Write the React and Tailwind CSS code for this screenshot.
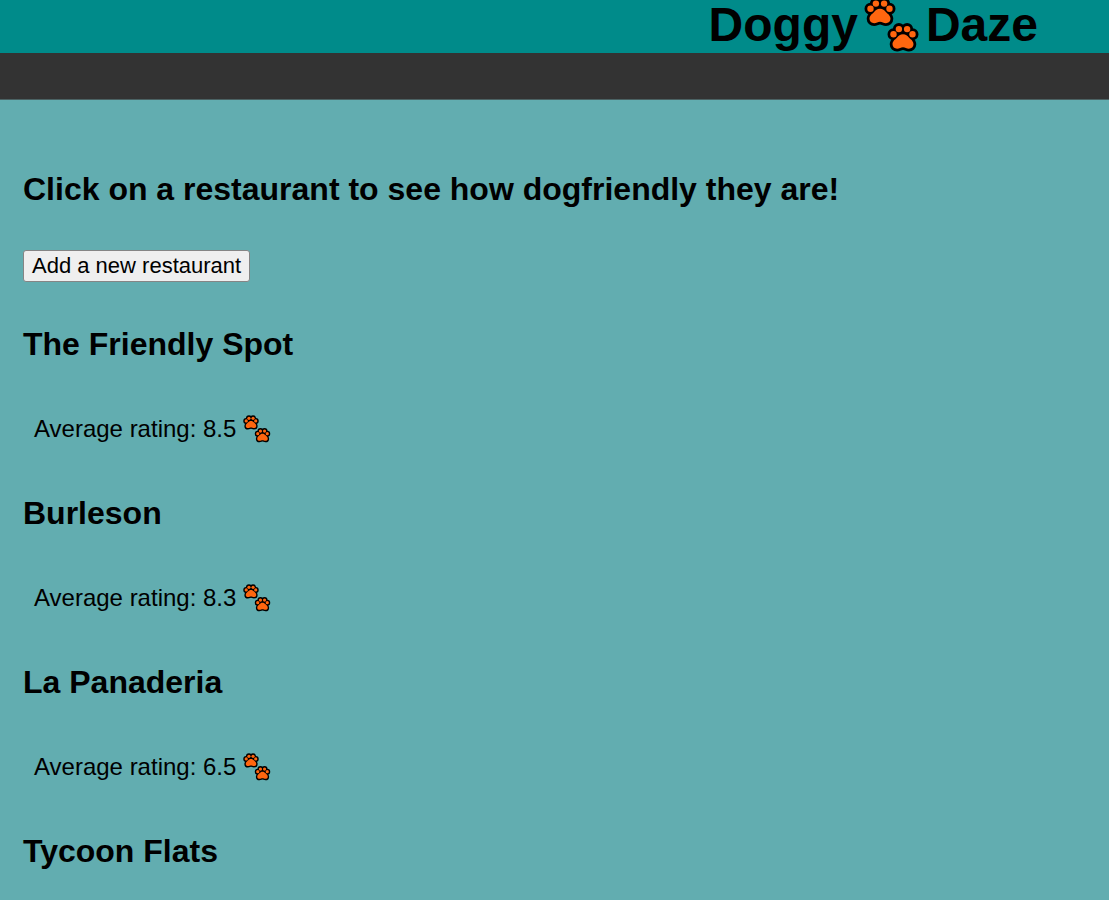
const restaurants = [
  { name: "The Friendly Spot", rating: "8.5" },
  { name: "Burleson", rating: "8.3" },
  { name: "La Panaderia", rating: "6.5" },
  { name: "Tycoon Flats" },
];

const PAD = "M15.5 11.8C12.6 11.8 11.2 13.2 9.4 15.2C7.4 17.2 5 18.6 5 21.8C5 24.4 7 26.2 9.6 26.2C12 26.2 13.3 24.8 15.5 24.8C17.7 24.8 19 26.2 21.4 26.2C24 26.2 26 24.4 26 21.8C26 18.6 23.6 17.2 21.6 15.2C19.8 13.2 18.4 11.8 15.5 11.8Z";

function Paw({ transform }) {
  const shapes = (
    <>
      <circle cx="6" cy="11.8" r="3.2" />
      <circle cx="11.4" cy="6.6" r="3.2" />
      <circle cx="19.6" cy="6.6" r="3.2" />
      <circle cx="25" cy="11.8" r="3.2" />
    </>
  );
  return (
    <g transform={transform}>
      <g fill="#000" stroke="#000" strokeWidth="5.6" strokeLinejoin="round">
        {shapes}
        <path d={PAD} />
      </g>
      <g fill="#ff660f">
        {shapes}
        <path d={PAD} />
      </g>
    </g>
  );
}

function Paws({ className }) {
  return (
    <svg viewBox="0 0 56 56" className={className} aria-hidden="true">
      <Paw transform="translate(0.5 0)" />
      <Paw transform="translate(23.5 25.5)" />
    </svg>
  );
}

export default function App() {
  return (
    <div className="min-h-screen bg-[#62adb0] font-['Liberation_Sans',Arial,sans-serif] text-black">
      <header className="flex h-[53px] items-start justify-end bg-[#008b8a] pr-[71px]">
        <h1 className="flex h-[50px] items-center text-5xl leading-none font-bold">
          Doggy
          <Paws className="mx-1.5 size-14 shrink-0" />
          Daze
        </h1>
      </header>
      <nav className="h-[47px] border-b border-[#4b6263] bg-[#333333]" aria-label="Main" />
      <main className="px-[23px] pt-[69px]">
        <h2 className="text-[32px] leading-10 font-bold">
          Click on a restaurant to see how dogfriendly they are!
        </h2>
        <button
          type="button"
          className="mt-[41px] block h-8 rounded-[3px] border border-[#858585] bg-[#efefef] px-2 text-[22px] leading-7"
        >
          Add a new restaurant
        </button>
        <ul className="pt-[42px]">
          {restaurants.map(({ name, rating }) => (
            <li key={name}>
              <h3 className="text-[32px] leading-10 font-bold">{name}</h3>
              {rating && (
                <p className="mt-[49px] mb-12 flex items-center gap-[7px] pl-[11px] text-2xl leading-8">
                  Average rating: {rating}
                  <Paws className="size-7" />
                </p>
              )}
            </li>
          ))}
        </ul>
      </main>
    </div>
  );
}
